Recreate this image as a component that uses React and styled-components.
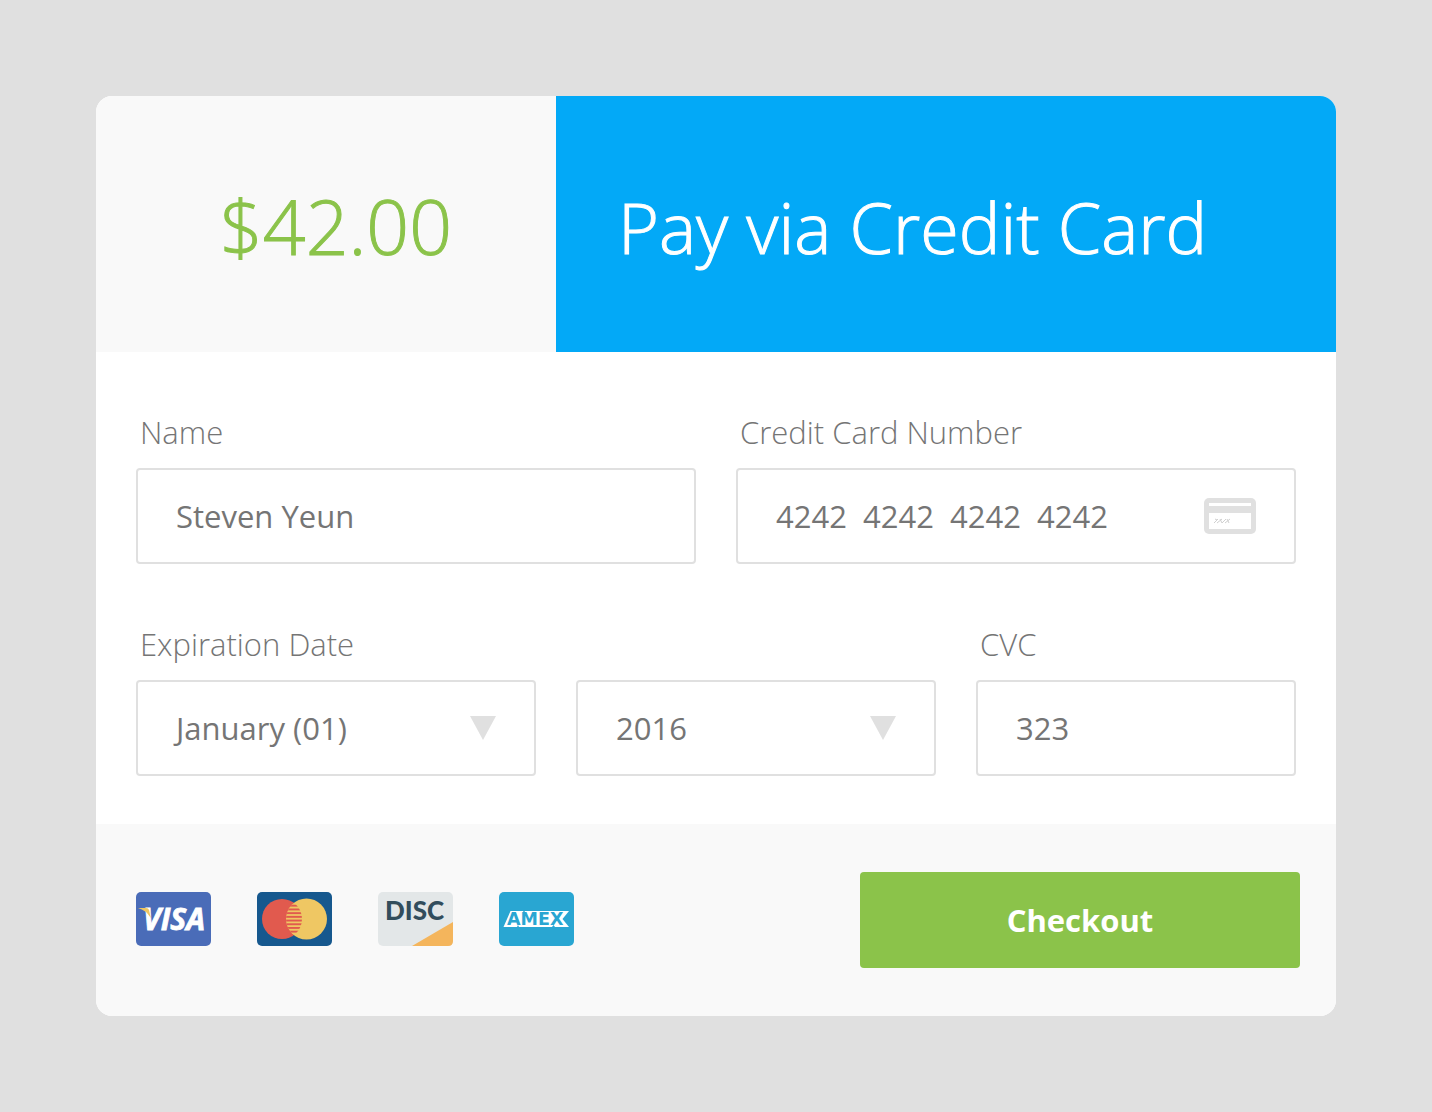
import React, { useState } from "react";
import styled, { createGlobalStyle } from "styled-components";

const GlobalStyle = createGlobalStyle`
  *, *::before, *::after { box-sizing: border-box; }
  body {
    margin: 0;
    background: #e0e0e0;
    color: #757575;
    font-family: "Open Sans", "Noto Sans", sans-serif;
  }
`;

const Page = styled.main`
  min-height: 100vh;
  padding: 96px;
  @media (max-width: 900px) { padding: 24px; }
`;

const Card = styled.form`
  border-radius: 16px;
  overflow: hidden;
  background: #ffffff;
`;

const Header = styled.header`
  display: grid;
  grid-template-columns: 23fr 39fr;
  min-height: 256px;
  line-height: 100px;
  @media (max-width: 1100px) { grid-template-columns: 1fr; }
`;

const Price = styled.p`
  margin: 0;
  padding: 4px 0 0 20px;
  display: flex;
  align-items: center;
  justify-content: center;
  background: #f9f9f9;
  color: #8bc34a;
  font-size: 75px;
  font-weight: 300;
  -webkit-text-stroke: 1px currentColor;
`;

const Title = styled.h1`
  margin: 0;
  padding: 6px 0 0 62px;
  display: flex;
  align-items: center;
  background: #03a9f7;
  color: #ffffff;
  font-size: 70px;
  font-weight: 300;
  -webkit-text-stroke: 1px currentColor;
`;

const Fields = styled.div`
  padding: 58px 40px 48px;
  display: grid;
  gap: 58px;
`;

const Row = styled.div`
  display: grid;
  grid-template-columns: ${(p) => p.$columns};
  gap: 40px;
  align-items: end;
  @media (max-width: 900px) { grid-template-columns: 1fr; }
`;

const Field = styled.div`
  min-width: 0;
`;

const Label = styled.label`
  display: block;
  margin-bottom: 14px;
  padding-left: 4px;
  font-size: 31px;
  font-weight: 300;
  line-height: 44px;
`;

const Control = styled.div`
  position: relative;
`;

const Input = styled.input`
  display: block;
  width: 100%;
  height: 96px;
  margin: 0;
  padding: 0 34px;
  border: 2px solid #e0e0e0;
  border-radius: 4px;
  background: #ffffff;
  color: #757575;
  font-family: inherit;
  font-size: 31px;
  font-weight: 500;
  text-indent: 4px;
  appearance: none;
  outline: none;
  &:focus { border-color: #03a9f7; }
`;

const Adornment = styled.span`
  position: absolute;
  right: 40px;
  top: 0;
  bottom: 0;
  display: flex;
  align-items: center;
  pointer-events: none;
`;

const Footer = styled.footer`
  display: flex;
  flex-wrap: wrap;
  align-items: center;
  justify-content: space-between;
  gap: 32px;
  padding: 48px 36px 48px 40px;
  background: #f9f9f9;
`;

const Brands = styled.ul`
  display: flex;
  flex-wrap: wrap;
  gap: 46px;
  margin: 0;
  padding: 0 0 2px;
  list-style: none;
`;

const Brand = styled.li`
  display: flex;
`;

const Checkout = styled.button`
  width: 440px;
  max-width: 100%;
  height: 96px;
  padding: 0;
  border: 0;
  border-radius: 4px;
  background: #8bc34a;
  color: #ffffff;
  font-family: inherit;
  font-size: 31px;
  font-weight: 700;
  cursor: pointer;
`;

const BrandMark = ({ label, color, children }) => (
  <svg width="75" height="54" viewBox="0 0 75 54" role="img" aria-label={label}>
    <rect width="75" height="54" rx="5" fill={color} />
    {children}
  </svg>
);

const Visa = () => (
  <BrandMark label="Visa" color="#4a6cb8">
    <text x="7" y="38" fill="#fff" stroke="#fff" strokeWidth="0.8" fontFamily="Open Sans" fontSize="30" fontWeight="700" fontStyle="italic">VISA</text>
    <path d="M2 16H10Q12.500 16 13 18L14.800 26Q10 18 2 16Z" fill="#efc662" />
  </BrandMark>
);

const Mastercard = () => (
  <BrandMark label="Mastercard" color="#16588e">
    <defs>
      <clipPath id="overlap"><circle cx="25" cy="27" r="20" /></clipPath>
      <clipPath id="yellow"><circle cx="49.500" cy="27" r="20.500" /></clipPath>
    </defs>
    <circle cx="25" cy="27" r="20" fill="#e15a4e" />
    <circle cx="49.500" cy="27" r="20.500" fill="#efc763" />
    <g clipPath="url(#overlap)">
      <g clipPath="url(#yellow)" fill="#e15a4e">
        {[12.7, 16.5, 20.2, 23.9, 27.6, 31.3, 35, 38.7].map((y) => (
          <rect key={y} x="28" y={y} width="18" height="1.900" />
        ))}
      </g>
    </g>
  </BrandMark>
);

const Discover = () => (
  <BrandMark label="Discover" color="#e3e7e8">
    <text x="7" y="28" fill="#324d5c" fontFamily="Lato" fontSize="26" fontWeight="900">DISC</text>
    <path d="M34 54L75 30V49Q75 54 70 54Z" fill="#f4b55c" />
  </BrandMark>
);

const Amex = () => (
  <BrandMark label="American Express" color="#29a6d2">
    <path d="M4.500 35L11.500 19H24L25 21L26 19H70L63.500 27L70 35H56L54.500 33L53 35H20L19 33L18 35Z" fill="#fff" />
    <text x="8" y="33" fill="#29a6d2" fontFamily="DejaVu Sans" fontSize="17.500" fontWeight="700">AMEX</text>
  </BrandMark>
);

const CardGlyph = () => (
  <svg width="52" height="36" viewBox="0 0 52 36" aria-hidden="true">
    <rect width="52" height="36" rx="5" fill="#e0e0e0" />
    <path d="M5 5H47V8H5ZM5 15H47V31H5Z" fill="#fff" />
    <path d="M10 25l4-4M11 21l2 1M13 25l5-4M16 21l2 4M18 25l4-4M21 25l5-4M23 21l2 4" stroke="#d0d0d0" fill="none" />
  </svg>
);

const Arrow = () => (
  <svg width="26" height="24" viewBox="0 0 26 24" aria-hidden="true">
    <path d="M0 0H26L13 24Z" fill="#e0e0e0" />
  </svg>
);

const months = ["January", "February", "March", "April", "May", "June", "July", "August", "September", "October", "November", "December"];
const years = ["2016", "2017", "2018", "2019", "2020", "2021"];

export default function App() {
  const [name, setName] = useState("Steven Yeun");
  const [number, setNumber] = useState("4242  4242  4242  4242");
  const [cvc, setCvc] = useState("323");

  return (
    <>
      <GlobalStyle />
      <Page>
        <Card onSubmit={(e) => e.preventDefault()}>
          <Header>
            <Price>$42.00</Price>
            <Title>Pay via Credit Card</Title>
          </Header>
          <Fields>
            <Row $columns="1fr 1fr">
              <Field>
                <Label htmlFor="name">Name</Label>
                <Input id="name" value={name} onChange={(e) => setName(e.target.value)} />
              </Field>
              <Field>
                <Label htmlFor="number">Credit Card Number</Label>
                <Control>
                  <Input id="number" inputMode="numeric" value={number} onChange={(e) => setNumber(e.target.value)} />
                  <Adornment><CardGlyph /></Adornment>
                </Control>
              </Field>
            </Row>
            <Row $columns="10fr 9fr 8fr">
              <Field>
                <Label htmlFor="month">Expiration Date</Label>
                <Control>
                  <Input as="select" id="month" defaultValue="1">
                    {months.map((m, i) => (
                      <option key={m} value={i + 1}>{`${m} (${String(i + 1).padStart(2, "0")})`}</option>
                    ))}
                  </Input>
                  <Adornment><Arrow /></Adornment>
                </Control>
              </Field>
              <Field>
                <Control>
                  <Input as="select" aria-label="Expiration year" defaultValue="2016">
                    {years.map((y) => <option key={y}>{y}</option>)}
                  </Input>
                  <Adornment><Arrow /></Adornment>
                </Control>
              </Field>
              <Field>
                <Label htmlFor="cvc">CVC</Label>
                <Input id="cvc" inputMode="numeric" value={cvc} onChange={(e) => setCvc(e.target.value)} />
              </Field>
            </Row>
          </Fields>
          <Footer>
            <Brands>
              <Brand><Visa /></Brand>
              <Brand><Mastercard /></Brand>
              <Brand><Discover /></Brand>
              <Brand><Amex /></Brand>
            </Brands>
            <Checkout type="submit">Checkout</Checkout>
          </Footer>
        </Card>
      </Page>
    </>
  );
}
